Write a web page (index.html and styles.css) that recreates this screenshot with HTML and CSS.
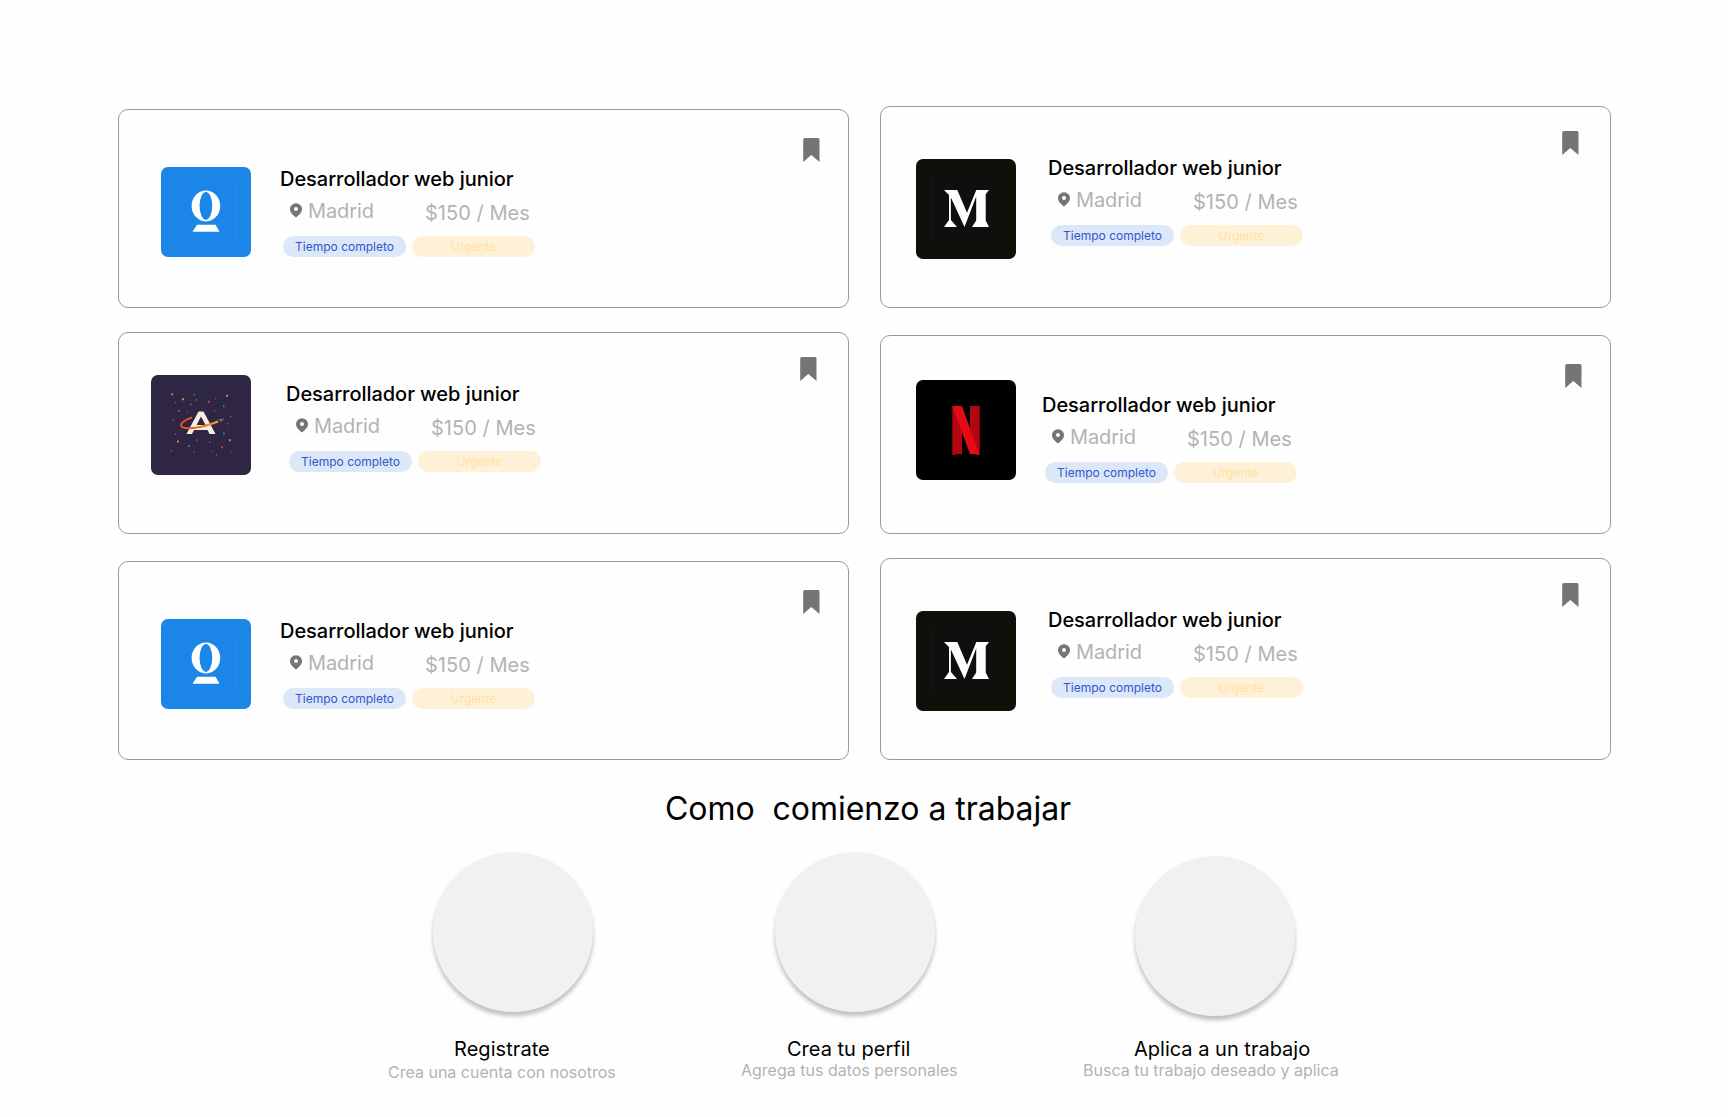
FILE: index.html
```html
<!DOCTYPE html>
<html lang="es">
<head>
<meta charset="utf-8">
<title>Ofertas de trabajo</title>
<link rel="stylesheet" href="styles.css">
</head>
<body>
<svg class="sprite" aria-hidden="true">
  <symbol id="bookmark" viewBox="0 0 17 24"><path d="M2 0H15Q16.500 0 16.500 1.500V24L8.300 17L.2 24V1.500Q.2 0 2 0Z" fill="#757575"/></symbol>
  <symbol id="pin" viewBox="0 0 12 15"><path fill-rule="evenodd" d="M6 .2A5.900 5.900 0 0 1 12 6.200C12 9.300 9.300 11.500 6 14.600C2.700 11.500 0 9.300 0 6.200A5.900 5.900 0 0 1 6 .2ZM6 4.100a2 2 0 1 0 0 4a2 2 0 1 0 0-4Z" fill="#757575"/></symbol>
  <symbol id="logo-o" viewBox="0 0 90 90">
    <rect width="90" height="90" rx="7" fill="#1c86e8"/>
    <path d="M75.200 16V73" stroke="#2b8ce6" stroke-width=".8"/>
    <ellipse cx="44.900" cy="38.900" rx="14.300" ry="15.500" fill="#fff"/>
    <ellipse cx="44.900" cy="38.900" rx="6.300" ry="14" fill="#1c86e8"/>
    <path d="M36 57.700H54.500L58.500 64.800H31.500Z" fill="#fff"/>
  </symbol>
  <symbol id="logo-m" viewBox="0 0 100 100">
    <rect width="100" height="100" rx="7" fill="#100f0a"/>
    <rect x="16.500" y="17" width="66" height="64" fill="#100f0f"/>
    <path d="M16.500 17V81" stroke="#1d1c1b" stroke-width=".8"/>
    <path d="M28 31H41.300L51 53.700L60.300 31H73L69.700 35.200V61.500L73 68H56L60.200 61.500V37.500L48.500 68L34.900 38.500V61L41 68H28L33 61V36Z" fill="#fff"/>
  </symbol>
  <symbol id="logo-a" viewBox="0 0 100 100">
    <rect width="100" height="100" rx="7" fill="#2f2643"/>
    <path fill-rule="evenodd" d="M47.500 36.500H52.500L64.500 59H58.500L56.600 55H43L41 59H35.500ZM50 41.500L45.500 50H54.500Z" fill="#f3eee2"/>
    <path d="M41 42.700C34 44.700 29.500 48 30 50.500C31 55 48 54 67 46.500" fill="none" stroke="url(#orbit)" stroke-width="1.900"/>
    <path d="M67 44.200L73.500 43.600L69.300 47.600L69 45.500Z" fill="#77716e"/>
    <g stroke-width="1.900">
      <path d="M31 24.300h1.900M75 20.800h1.900M26 66.500h1.900M78 65.300h1.900M20.500 19.300h1.500" stroke="#d99432"/>
      <path d="M57 26.700h1.900M70 72.200h1.900M76 48.600h1.200M24 58.900h1.200" stroke="#d53c3c"/>
      <path d="M27 35.900h1.900M72 31.300h1.500M37 71h1.900M72 58.500h1.900M45 25h1.200" stroke="#178a96"/>
      <path d="M21.500 45.200h1.500M19.500 75.600h1.500M60 76.400h1.200M79 76.600h1.200M42.500 19.500h1.500M64 23.500h1.200" stroke="#188267"/>
      <path d="M39 29.400h1.900M79 41.600h1.500M45 65.200h1.500M42 76.600h1.500M58 67h1.200M63 35.800h1.200M24 27.500h1M36 37.500h1M65 79.800h1" stroke="#625b6b"/>
    </g>
  </symbol>
  <symbol id="logo-n" viewBox="0 0 100 100">
    <rect width="100" height="100" rx="7" fill="#000"/>
    <path d="M36.300 26H46V74Q41 74 36.300 75ZM54 26H63.700V75L54 72Z" fill="#b20710"/>
    <path d="M36.300 26H46L63.700 75Q59 74 54 74Z" fill="#e50914"/>
  </symbol>
  <linearGradient id="orbit"><stop offset="0" stop-color="#e84a31"/><stop offset=".4" stop-color="#ee632c"/><stop offset="1" stop-color="#faa51e"/></linearGradient>
</svg>

<main class="page">
  <section class="jobs">
    <div class="column">
      <article class="card card-o">
        <svg class="logo"><use href="#logo-o"/></svg>
        <div class="info">
          <h2 class="title">Desarrollador web junior</h2>
          <div class="meta"><svg class="pin"><use href="#pin"/></svg><span class="city">Madrid</span><span class="salary">$150 / Mes</span></div>
          <div class="tags"><span class="tag full">Tiempo completo</span><span class="tag urgent">Urgente</span></div>
        </div>
        <svg class="bookmark"><use href="#bookmark"/></svg>
      </article>
      <article class="card card-a">
        <svg class="logo"><use href="#logo-a"/></svg>
        <div class="info">
          <h2 class="title">Desarrollador web junior</h2>
          <div class="meta"><svg class="pin"><use href="#pin"/></svg><span class="city">Madrid</span><span class="salary">$150 / Mes</span></div>
          <div class="tags"><span class="tag full">Tiempo completo</span><span class="tag urgent">Urgente</span></div>
        </div>
        <svg class="bookmark"><use href="#bookmark"/></svg>
      </article>
      <article class="card card-o">
        <svg class="logo"><use href="#logo-o"/></svg>
        <div class="info">
          <h2 class="title">Desarrollador web junior</h2>
          <div class="meta"><svg class="pin"><use href="#pin"/></svg><span class="city">Madrid</span><span class="salary">$150 / Mes</span></div>
          <div class="tags"><span class="tag full">Tiempo completo</span><span class="tag urgent">Urgente</span></div>
        </div>
        <svg class="bookmark"><use href="#bookmark"/></svg>
      </article>
    </div>
    <div class="column">
      <article class="card card-m">
        <svg class="logo"><use href="#logo-m"/></svg>
        <div class="info">
          <h2 class="title">Desarrollador web junior</h2>
          <div class="meta"><svg class="pin"><use href="#pin"/></svg><span class="city">Madrid</span><span class="salary">$150 / Mes</span></div>
          <div class="tags"><span class="tag full">Tiempo completo</span><span class="tag urgent">Urgente</span></div>
        </div>
        <svg class="bookmark"><use href="#bookmark"/></svg>
      </article>
      <article class="card card-n">
        <svg class="logo"><use href="#logo-n"/></svg>
        <div class="info">
          <h2 class="title">Desarrollador web junior</h2>
          <div class="meta"><svg class="pin"><use href="#pin"/></svg><span class="city">Madrid</span><span class="salary">$150 / Mes</span></div>
          <div class="tags"><span class="tag full">Tiempo completo</span><span class="tag urgent">Urgente</span></div>
        </div>
        <svg class="bookmark"><use href="#bookmark"/></svg>
      </article>
      <article class="card card-m">
        <svg class="logo"><use href="#logo-m"/></svg>
        <div class="info">
          <h2 class="title">Desarrollador web junior</h2>
          <div class="meta"><svg class="pin"><use href="#pin"/></svg><span class="city">Madrid</span><span class="salary">$150 / Mes</span></div>
          <div class="tags"><span class="tag full">Tiempo completo</span><span class="tag urgent">Urgente</span></div>
        </div>
        <svg class="bookmark"><use href="#bookmark"/></svg>
      </article>
    </div>
  </section>

  <section class="start">
    <h1 class="heading">Como  comienzo a trabajar</h1>
    <div class="steps">
      <div class="step step-register">
        <div class="circle"></div>
        <h3 class="step-title">Registrate</h3>
        <p class="step-text">Crea una cuenta con nosotros</p>
      </div>
      <div class="step step-profile">
        <div class="circle"></div>
        <h3 class="step-title">Crea tu perfil</h3>
        <p class="step-text">Agrega tus datos personales</p>
      </div>
      <div class="step step-apply">
        <div class="circle"></div>
        <h3 class="step-title">Aplica a un trabajo</h3>
        <p class="step-text">Busca tu trabajo deseado y aplica</p>
      </div>
    </div>
  </section>
</main>
</body>
</html>
```
FILE: styles.css
```css
* { box-sizing: border-box; }
body { margin: 0; background: #fefefe; color: #000; font-family: Inter, sans-serif; }
h1, h2, h3, p { margin: 0; font-weight: 400; }
svg { display: block; flex: none; }
.sprite { position: absolute; width: 0; height: 0; }
.page { height: 1117px; overflow: hidden; }

.jobs { display: flex; gap: 31px; height: 760px; padding-left: 118px; align-items: flex-end; }
.column { width: 731px; display: flex; flex-direction: column; }
.card { display: flex; align-items: flex-start; border: 1px solid #999; border-radius: 10px; }
.logo { width: 100px; height: 100px; }
.info { width: 256px; }
.bookmark { width: 17px; height: 24px; margin-left: auto; }

.card-o { height: 199px; }
.card-o .logo { width: 90px; height: 90px; margin: 57px 0 0 42px; }
.card-o .info { margin: 57px 0 0 28px; }
.card-o .bookmark { margin-top: 28px; margin-right: 28px; }

.card-a { height: 202px; margin: 24px 0 27px; }
.card-a .logo { margin: 42px 0 0 32px; }
.card-a .info { margin: 49px 0 0 34px; }
.card-a .bookmark { margin-top: 24px; margin-right: 31px; }

.card-m { height: 202px; }
.card-m .logo { margin: 52px 0 0 35px; }
.card-m .info { margin: 49px 0 0 31px; }
.card-m .bookmark { margin-top: 24px; margin-right: 31px; }

.card-n { height: 199px; margin: 27px 0 24px; }
.card-n .logo { margin: 44px 0 0 35px; }
.card-n .info { margin: 57px 0 0 25px; }
.card-n .bookmark { margin-top: 28px; margin-right: 28px; }

.title { padding-left: 1px; font-size: 20px; line-height: 24px; font-weight: 500; letter-spacing: -.04px; white-space: nowrap; }
.meta { display: flex; align-items: flex-start; height: 45px; padding-top: 8px; color: #b3b3b3; font-size: 20px; line-height: 24px; white-space: nowrap; }
.pin { width: 12px; height: 15px; margin: 4px 6px 0 11px; }
.city { width: 117px; letter-spacing: -.1px; }
.salary { padding-top: 2px; letter-spacing: .04px; }
.tags { display: flex; gap: 6px; padding-left: 4px; }
.tag { width: 123px; height: 21px; border-radius: 11px; font-size: 12px; line-height: 21px; text-align: center; }
.full { background: #dce7f8; color: #3056d3; }
.urgent { background: #fff1d8; color: #ffe1a0; }

.start { padding-top: 29px; }
.heading { margin-left: 665px; font-size: 32px; line-height: 39px; letter-spacing: -.04px; white-space: pre; }
.steps { display: flex; align-items: flex-start; padding: 24px 0 0 388px; }
.step { display: flex; flex-direction: column; }
.circle { width: 160px; height: 160px; border-radius: 50%; background: #f1f1f1; box-shadow: 0 4px 4px rgba(0, 0, 0, .25); }
.step-title { font-size: 20px; line-height: 24px; white-space: nowrap; }
.step-text { font-size: 16px; line-height: 19px; color: #b3b3b3; white-space: nowrap; }

.step-register { width: 353px; }
.step-register .circle { margin-left: 45px; }
.step-register .step-title { margin: 25px 0 0 66px; letter-spacing: .06px; }
.step-register .step-text { margin-top: 2px; }
.step-profile { width: 342px; }
.step-profile .circle { margin-left: 34px; }
.step-profile .step-title { margin: 25px 0 0 46px; }
.step-apply { padding-top: 4px; }
.step-apply .circle { margin-left: 52px; }
.step-apply .step-title { margin: 21px 0 0 51px; }
```
